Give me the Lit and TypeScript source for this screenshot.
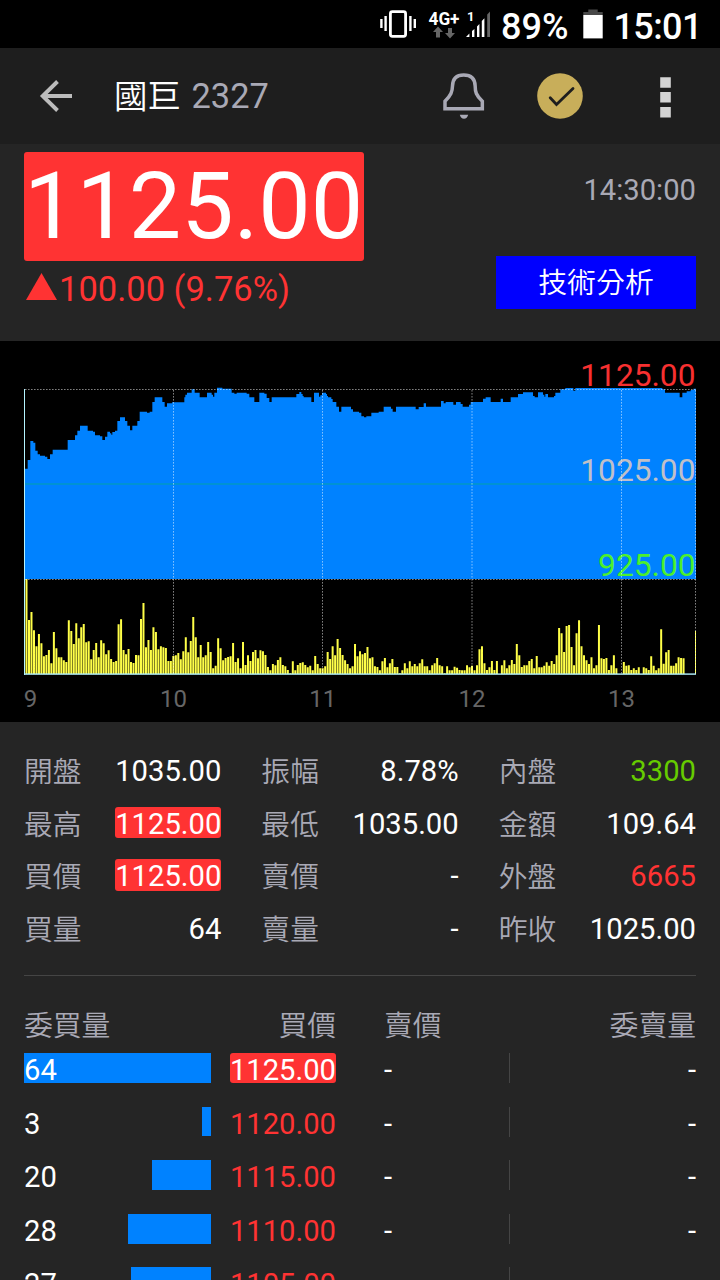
import { LitElement, html, svg, css } from "lit";
import { customElement } from "lit/decorators.js";

const AXIS_LEFT = 24;
const AXIS_RIGHT = 696;

/* Price steps in thirds of a pixel: [x, y]; every level holds until the next x. */
const PRICE: number[][] = [
  [75,296],[83,270],[91,213],[100,218],[106,242],[113,253],[120,257],[135,260],[142,267],[150,253],[158,239],[203,210],
  [225,196],[232,182],[240,167],[263,182],[279,185],[285,196],[300,199],[307,210],[315,200],[322,185],[330,190],[334,194],
  [337,186],[345,182],[352,153],[360,142],[375,153],[382,167],[390,181],[397,167],[412,153],[419,125],[441,128],[449,125],
  [457,96],[464,82],[487,96],[494,110],[501,100],[516,97],[553,82],[556,74],[561,68],[575,58],[584,68],[599,82],[621,68],
  [635,74],[639,80],[643,68],[651,53],[667,56],[695,68],[703,71],[710,68],[740,71],[748,82],[763,96],[778,68],[793,71],
  [800,84],[808,96],[815,82],[889,72],[898,66],[904,72],[908,78],[911,82],[934,96],[942,68],[957,80],[961,76],[966,68],
  [978,72],[981,78],[984,82],[994,87],[998,96],[1009,110],[1017,125],[1024,110],[1053,118],[1059,125],[1077,128],[1084,139],
  [1092,142],[1099,139],[1114,128],[1136,125],[1151,110],[1173,116],[1178,125],[1188,110],[1247,118],[1256,111],[1271,100],
  [1278,110],[1323,93],[1331,100],[1337,96],[1360,104],[1368,96],[1382,102],[1388,110],[1407,104],[1412,96],[1449,86],
  [1457,82],[1472,96],[1502,86],[1509,96],[1532,82],[1554,72],[1569,67],[1599,78],[1604,82],[1614,67],[1629,74],[1633,80],
  [1636,72],[1644,82],[1662,78],[1666,68],[1681,58],[1696,54],[1720,62],[1726,54],[1987,58],[1995,68],[2039,82],[2047,68],
  [2060,64],[2072,60],[2080,56],
];

/* Tops of the volume bars in thirds of a pixel; 312 is the baseline. */
const VOLUME: number[] = [
  27,150,126,181,229,192,220,259,255,240,280,186,235,262,262,271,276,151,183,222,160,205,172,162,217,214,268,240,219,262,
  211,220,253,241,267,276,273,163,148,240,253,237,276,279,255,256,147,99,232,210,240,172,186,238,229,232,234,273,273,258,
  256,249,268,244,202,247,213,141,202,262,225,262,256,216,246,295,287,205,235,271,264,261,259,219,276,265,295,216,285,256,
  273,246,240,265,241,244,255,291,301,282,286,270,262,285,289,300,310,274,301,285,279,277,285,292,287,301,258,282,295,295,
  289,246,267,229,256,207,234,255,271,282,295,289,222,259,244,253,249,231,265,262,289,291,301,274,264,292,280,267,291,291,
  310,301,280,295,274,289,282,289,280,268,289,289,301,286,280,264,286,289,310,289,301,301,290,293,300,301,301,286,292,287,
  301,286,238,229,280,300,292,273,300,273,312,286,271,295,286,270,282,222,256,291,286,286,273,267,295,258,292,292,287,277,
  287,273,282,256,174,190,246,168,165,231,286,190,151,229,256,271,282,262,295,286,165,265,267,264,300,286,256,295,312,312,
  276,287,286,300,295,300,292,312,292,295,300,259,287,301,295,178,281,247,240,287,287,280,262,264,265,
];

function areaPath(): string {
  const y = (v: number) => (370 + v / 3 - 341).toFixed(2);
  let d = `M${AXIS_LEFT + 1} 238`;
  for (let i = 0; i < PRICE.length; i++) {
    const next = i + 1 < PRICE.length ? PRICE[i + 1][0] / 3 : AXIS_RIGHT;
    d += `L${(PRICE[i][0] / 3).toFixed(2)} ${y(PRICE[i][1])}H${next.toFixed(2)}`;
  }
  return d + "V238Z";
}

function volumePath(): string {
  let d = "";
  VOLUME.forEach((top, i) => {
    if (top >= 312) return;
    const x = 25.5 + i * 2.4889;
    const h = (312 - top) / 3;
    d += `M${x.toFixed(2)} 333v${(-h).toFixed(2)}h2v${h.toFixed(2)}z`;
  });
  return d;
}

@customElement("intraday-chart")
export class IntradayChart extends LitElement {
  static styles = css`
    :host { display: block; height: 381px; background: #000; }
    svg { display: block; }
    text { font-family: Roboto, sans-serif; }
    .price { font-size: 31.7px; text-anchor: end; }
    .hour { font-size: 24px; fill: #666; text-anchor: middle; }
    .grid { stroke: #fff; stroke-opacity: 0.5; stroke-dasharray: 1.6 1.4; }
  `;
  render() {
    return html`<svg width="720" height="381" viewBox="0 0 720 381">
      <path d=${areaPath()} fill="#0082ff" />
      <rect x="25" y="142" width="671" height="2" fill="#0092d4" />
      <path d=${volumePath()} fill="#ffff48" />
      <rect x="695" y="290" width="1" height="43" fill="#ffff48" />
      <text class="price" x="695.5" y="45" fill="#f73030">1125.00</text>
      <text class="price" x="695.5" y="140" fill="#c0c0c8">1025.00</text>
      <text class="price" x="695.5" y="235" fill="#4cf02c">925.00</text>
      <path class="grid" d="M25 48.5H696M25 238.5H696" />
      ${[173.5, 322.5, 472, 621.5, 695.5].map((x) => svg`<path class="grid" d="M${x} 49V333" />`)}
      <rect x="24" y="48" width="1" height="286" fill="#b4f4ff" />
      <rect x="24" y="332.4" width="672" height="1.4" fill="#b4f4ff" />
      <text class="hour" x="30.5" y="366.4">9</text>
      ${[10, 11, 12, 13].map((h, i) => svg`<text class="hour" x=${173.5 + i * 149.3} y="366.4">${h}</text>`)}
    </svg>`;
  }
}

const STATS: string[][] = [
  ["開盤", "1035.00", "", "振幅", "8.78%", "", "內盤", "3300", "green"],
  ["最高", "1125.00", "chip", "最低", "1035.00", "", "金額", "109.64", ""],
  ["買價", "1125.00", "chip", "賣價", "-", "", "外盤", "6665", "red"],
  ["買量", "64", "", "賣量", "-", "", "昨收", "1025.00", ""],
];

const BIDS = [
  { qty: "64", bar: 187, price: "1125.00", chip: true },
  { qty: "3", bar: 8.8, price: "1120.00", chip: false },
  { qty: "20", bar: 59, price: "1115.00", chip: false },
  { qty: "28", bar: 82.7, price: "1110.00", chip: false },
  { qty: "27", bar: 79.7, price: "1105.00", chip: false },
];

@customElement("app-root")
export class AppRoot extends LitElement {
  static styles = css`
    :host {
      display: block; width: 720px; height: 1280px; overflow: hidden; background: #252525; color: #fff;
      font-family: Roboto, "Noto Sans CJK TC", sans-serif; font-size: 29.2px;
    }
    * { box-sizing: border-box; }
    svg { display: block; }
    .status {
      height: 48px; background: #000; display: grid; grid-template-columns: 125px 82px 30.5px 107px;
      padding-left: 376px; font-size: 36px; font-weight: 500; line-height: 54.6px; white-space: nowrap;
    }
    .clock { letter-spacing: -0.6px; }
    .tiny { font-weight: 700; font-family: Roboto, sans-serif; }
    .bar { height: 96px; background: #1e1e1e; display: flex; align-items: center; }
    .back { margin-left: 38px; width: 76px; }
    .title { width: 324px; font-size: 34.4px; line-height: 95px; white-space: nowrap; }
    .name { font-size: 33.5px; font-weight: 350; }
    .code { color: #a9a9b5; margin-left: 2px; }
    .bell { width: 98px; }
    .check { width: 118px; }
    .quote { height: 197px; padding: 8px 24px 0; display: flex; justify-content: space-between; }
    .last {
      width: 339.5px; height: 108.8px; line-height: 109.6px; background: #f33; border-radius: 3px;
      font-size: 93.3px; white-space: nowrap;
    }
    .change { display: flex; align-items: flex-start; color: #f33; font-size: 34.5px; line-height: 56px; white-space: nowrap; }
    .up { margin: 12.2px 2px 0 2px; }
    .side { display: flex; flex-direction: column; align-items: flex-end; }
    .time { color: #a9a9b5; line-height: 40px; margin-top: 18px; }
    .tech {
      margin-top: 46.3px; width: 200px; height: 52.6px; background: #00f; text-align: center;
      font-size: 28.9px; line-height: 55px; font-weight: 350;
    }
    .stats {
      padding: 23px 24px 0; display: grid; grid-template-columns: repeat(3, 197.33px); column-gap: 40px;
      grid-auto-rows: 52.5px;
    }
    .cell { display: flex; justify-content: space-between; line-height: 52.5px; white-space: nowrap; }
    .label { color: #a9a9b5; font-size: 28.8px; font-weight: 350; line-height: 54.5px; }
    .green { color: #6c0; }
    .red { color: #f33; }
    .chip {
      background: #f33; border-radius: 3px; height: 31.5px; line-height: 34.6px; margin-top: 9px;
    }
    .rule { height: 1px; background: #454545; margin: 20px 24px 0; }
    .book {
      height: 77px; padding: 23px 24px 0; display: grid; grid-template-columns: 187px 125px 48px 125px 187px;
    }
    .end { text-align: right; }
    .ask { grid-column: 4; }
    .level {
      padding: 0 24px; margin-bottom: 23.6px; height: 30px; line-height: 35px;
      display: grid; grid-template-columns: 187px 125px 48px 125px 1px 186px; grid-template-rows: 30px;
      white-space: nowrap;
    }
    .depth { display: grid; }
    .depth > * { grid-area: 1 / 1; }
    .fill { background: #0082ff; height: 29.8px; justify-self: end; }
    .bid { justify-self: end; height: 30px; color: #f33; border-radius: 3px; }
    .best { background: #f33; color: #fff; }
    .tick { background: #454545; }
  `;

  render() {
    return html`
      <div class="status">
        <svg width="125" height="48" viewBox="0 0 125 48">
          <rect x="14.4" y="11.7" width="15.2" height="24.6" rx="2" fill="none" stroke="#fff" stroke-width="2.8" />
          <path d="M9.6 16v15M34.4 16v15M5.4 19v9M38.8 19v9" stroke="#fff" stroke-width="2.4" />
          <text class="tiny" x="52.5" y="24.5" font-size="17.5" textLength="31" lengthAdjust="spacingAndGlyphs" fill="#fff">4G+</text>
          <path d="M62 26.5l5 5.5h-3v5.5h-4v-5.5h-3z M74 38.5l-5-5.5h3v-5h4v5h3z" fill="#666" />
          <text class="tiny" x="91" y="20.5" font-size="13" fill="#fff">1</text>
          <path d="M90 37l3.4-3.6V37zM96 37v-6l2.4-2v8zM101 37V26.5l2.4-2.5V37zM105.8 37v-16l2.6-2.8V37z" fill="#fff" />
          <path d="M111.2 37V14.5l2.8-3V37z" fill="#666" />
        </svg>
        <span>89%</span>
        <svg width="30" height="48" viewBox="0 0 30 48">
          <path d="M0.3 15v-3h5v-2.6h9.4V12h5v3z" fill="#484848" />
          <rect x="0.3" y="15" width="19.4" height="23.4" fill="#fff" />
        </svg>
        <span class="clock">15:01</span>
      </div>

      <div class="bar">
        <svg class="back" width="76" height="40" viewBox="38 76 76 40">
          <path d="M72 96H43M57.5 81.5L42.7 96L57.5 110.5" fill="none" stroke="#bcbcbc" stroke-width="3.9" />
        </svg>
        <div class="title"><span class="name">國巨</span> <span class="code">2327</span></div>
        <svg class="bell" width="98" height="60" viewBox="438 66 98 60">
          <path transform="translate(370 0) scale(.33333)" fill="none" stroke="#a9a9b5" stroke-width="10.5"
            d="M225 326.5H337V304C318 286 315.5 275 315.5 258C315 235 302 225 281 225C260 225 248 235 247.5 258C247 275 243 286 225 304Z" />
          <path d="M459.8 114.7h8.4c-.8 2.6-2 4-4.2 4s-3.4-1.4-4.2-4z" fill="#a9a9b5" />
        </svg>
        <svg class="check" width="118" height="60" viewBox="536 66 118 60">
          <circle cx="560" cy="96" r="22.8" fill="#c8ae5a" />
          <path d="M550.2 97.8L556.5 104.5L573 88.5" fill="none" stroke="#1e1e1e" stroke-width="2.8" stroke-linecap="round" />
        </svg>
        <svg width="30" height="60" viewBox="654 66 30 60">
          <path d="M660.2 77.2h10.6v10.6h-10.6zM660.2 92h10.6v10.5h-10.6zM660.2 107h10.6v10.6h-10.6z" fill="#d4d4d4" />
        </svg>
      </div>

      <div class="quote">
        <div>
          <div class="last">1125.00</div>
          <div class="change">
            <svg class="up" width="31" height="27" viewBox="0 0 31 27"><path d="M15.5 0L31 27H0z" fill="#f33" /></svg>
            <span>100.00 (9.76%)</span>
          </div>
        </div>
        <div class="side">
          <div class="time">14:30:00</div>
          <div class="tech">技術分析</div>
        </div>
      </div>

      <intraday-chart></intraday-chart>

      <div class="stats">
        ${STATS.map((r) => [0, 3, 6].map((i) => html`
          <div class="cell"><span class="label">${r[i]}</span><span class=${r[i + 2]}>${r[i + 1]}</span></div>`))}
      </div>
      <div class="rule"></div>
      <div class="book">
        <span class="label">委買量</span><span class="label end">買價</span>
        <span class="label ask">賣價</span><span class="label end">委賣量</span>
      </div>
      <div>
        ${BIDS.map((b) => html`
          <div class="level">
            <div class="depth"><div class="fill" style="width:${b.bar}px"></div><span>${b.qty}</span></div>
            <span class="bid ${b.chip ? "best" : ""}">${b.price}</span>
            <i></i><span>-</span><i class="tick"></i><span class="end">-</span>
          </div>`)}
      </div>
    `;
  }
}
